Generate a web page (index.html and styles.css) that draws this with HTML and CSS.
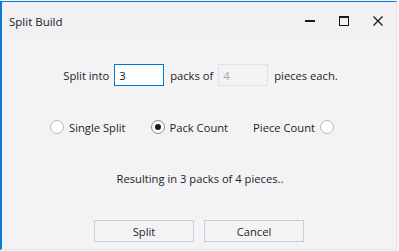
FILE: index.html
```html
<!DOCTYPE html>
<html>
<head>
<meta charset="utf-8">
<link rel="stylesheet" href="styles.css">
</head>
<body>
<div class="window">
  <div class="titlebar">
    <span class="title">Split Build</span>
    <div class="controls">
      <span class="ctl"><svg width="10" height="10" viewBox="0 0 10 10"><rect x="0" y="4" width="10" height="2" fill="#1a1a1a"/></svg></span>
      <span class="ctl"><svg width="10" height="10" viewBox="0 0 10 10"><rect x="0.5" y="0.5" width="9" height="9" fill="none" stroke="#1a1a1a" stroke-width="1"/><rect x="0" y="0" width="10" height="2" fill="#1a1a1a"/></svg></span>
      <span class="ctl"><svg width="10" height="10" viewBox="0 0 10 10"><path d="M0.5 0.5 L9.5 9.5 M9.5 0.5 L0.5 9.5" stroke="#1a1a1a" stroke-width="1.3" fill="none"/></svg></span>
    </div>
  </div>
  <div class="content">
    <div class="row row-split">
      <span>Split into</span>
      <span class="field active">3</span>
      <span>packs of</span>
      <span class="field disabled">4</span>
      <span>pieces each.</span>
    </div>
    <div class="row row-radios">
      <span class="opt"><span class="radio"></span><span>Single Split</span></span>
      <span class="opt"><span class="radio checked"></span><span>Pack Count</span></span>
      <span class="opt"><span>Piece Count</span><span class="radio"></span></span>
    </div>
    <div class="row row-result">Resulting in 3 packs of 4 pieces..</div>
    <div class="row row-buttons">
      <span class="btn">Split</span>
      <span class="btn">Cancel</span>
    </div>
  </div>
</div>
</body>
</html>
```
FILE: styles.css
```css
html, body {
  margin: 0;
  padding: 0;
  background: #f4f4f6;
}
body {
  width: 399px;
  height: 251px;
  overflow: hidden;
  padding-top: 1px;
  box-sizing: border-box;
  font-family: "Open Sans", "Noto Sans", sans-serif;
  font-size: 11.2px;
  color: #1e1e1e;
}
.window {
  width: 394px;
  height: 247px;
  border-top: 1px solid #0a7bd2;
  border-left: 2px solid #0a7bd2;
  border-right: 1px solid #e4e4ea;
  border-bottom: 1px solid #e4e4ea;
  background: #f3f3f5;
  display: flex;
  flex-direction: column;
}
.titlebar {
  height: 38px;
  display: flex;
  align-items: center;
  justify-content: space-between;
  background: #f1f1f4;
}
.title {
  margin-left: 7px;
  font-size: 11.5px;
  color: #1a1a1a;
}
.controls {
  display: flex;
  margin-right: 13px;
}
.ctl {
  width: 10px;
  height: 10px;
  display: flex;
  margin-left: 24px;
}
.content {
  display: flex;
  flex-direction: column;
}
.row {
  display: flex;
  align-items: center;
  justify-content: center;
}
.row-split {
  margin-top: 24px;
  height: 22px;
  gap: 5px;
  padding-left: 3px;
}
.row-split > span:nth-child(2),
.row-split > span:nth-child(4) {
  margin-right: 1px;
}
.field {
  box-sizing: border-box;
  width: 50px;
  height: 22px;
  padding: 0 4px;
  display: flex;
  align-items: center;
  background: #fff;
}
.field.active {
  border: 1px solid #0078d7;
  color: #111;
}
.field.disabled {
  border: 1px solid #e2e2e6;
  background: #f3f3f5;
  color: #a8a8a8;
}
.row-radios {
  margin-top: 31px;
  height: 20px;
  gap: 25px;
  padding-right: 14px;
}
.opt {
  display: flex;
  align-items: center;
  gap: 5px;
}
.radio {
  box-sizing: border-box;
  width: 14px;
  height: 14px;
  border-radius: 50%;
  border: 1px solid #b9b9bf;
  background: #fff;
  display: flex;
  align-items: center;
  justify-content: center;
}
.radio.checked {
  border-color: #8a8a8a;
}
.radio.checked::after {
  content: "";
  width: 6px;
  height: 6px;
  border-radius: 50%;
  background: #1a1a1a;
}
.row-result {
  margin-top: 31px;
  height: 20px;
  padding-left: 2px;
}
.row-buttons {
  margin-top: 32px;
  gap: 10px;
}
.btn {
  box-sizing: border-box;
  width: 100px;
  height: 22px;
  border: 1px solid #cdcdd4;
  background: #f3f3f5;
  display: flex;
  align-items: center;
  justify-content: center;
}
```
